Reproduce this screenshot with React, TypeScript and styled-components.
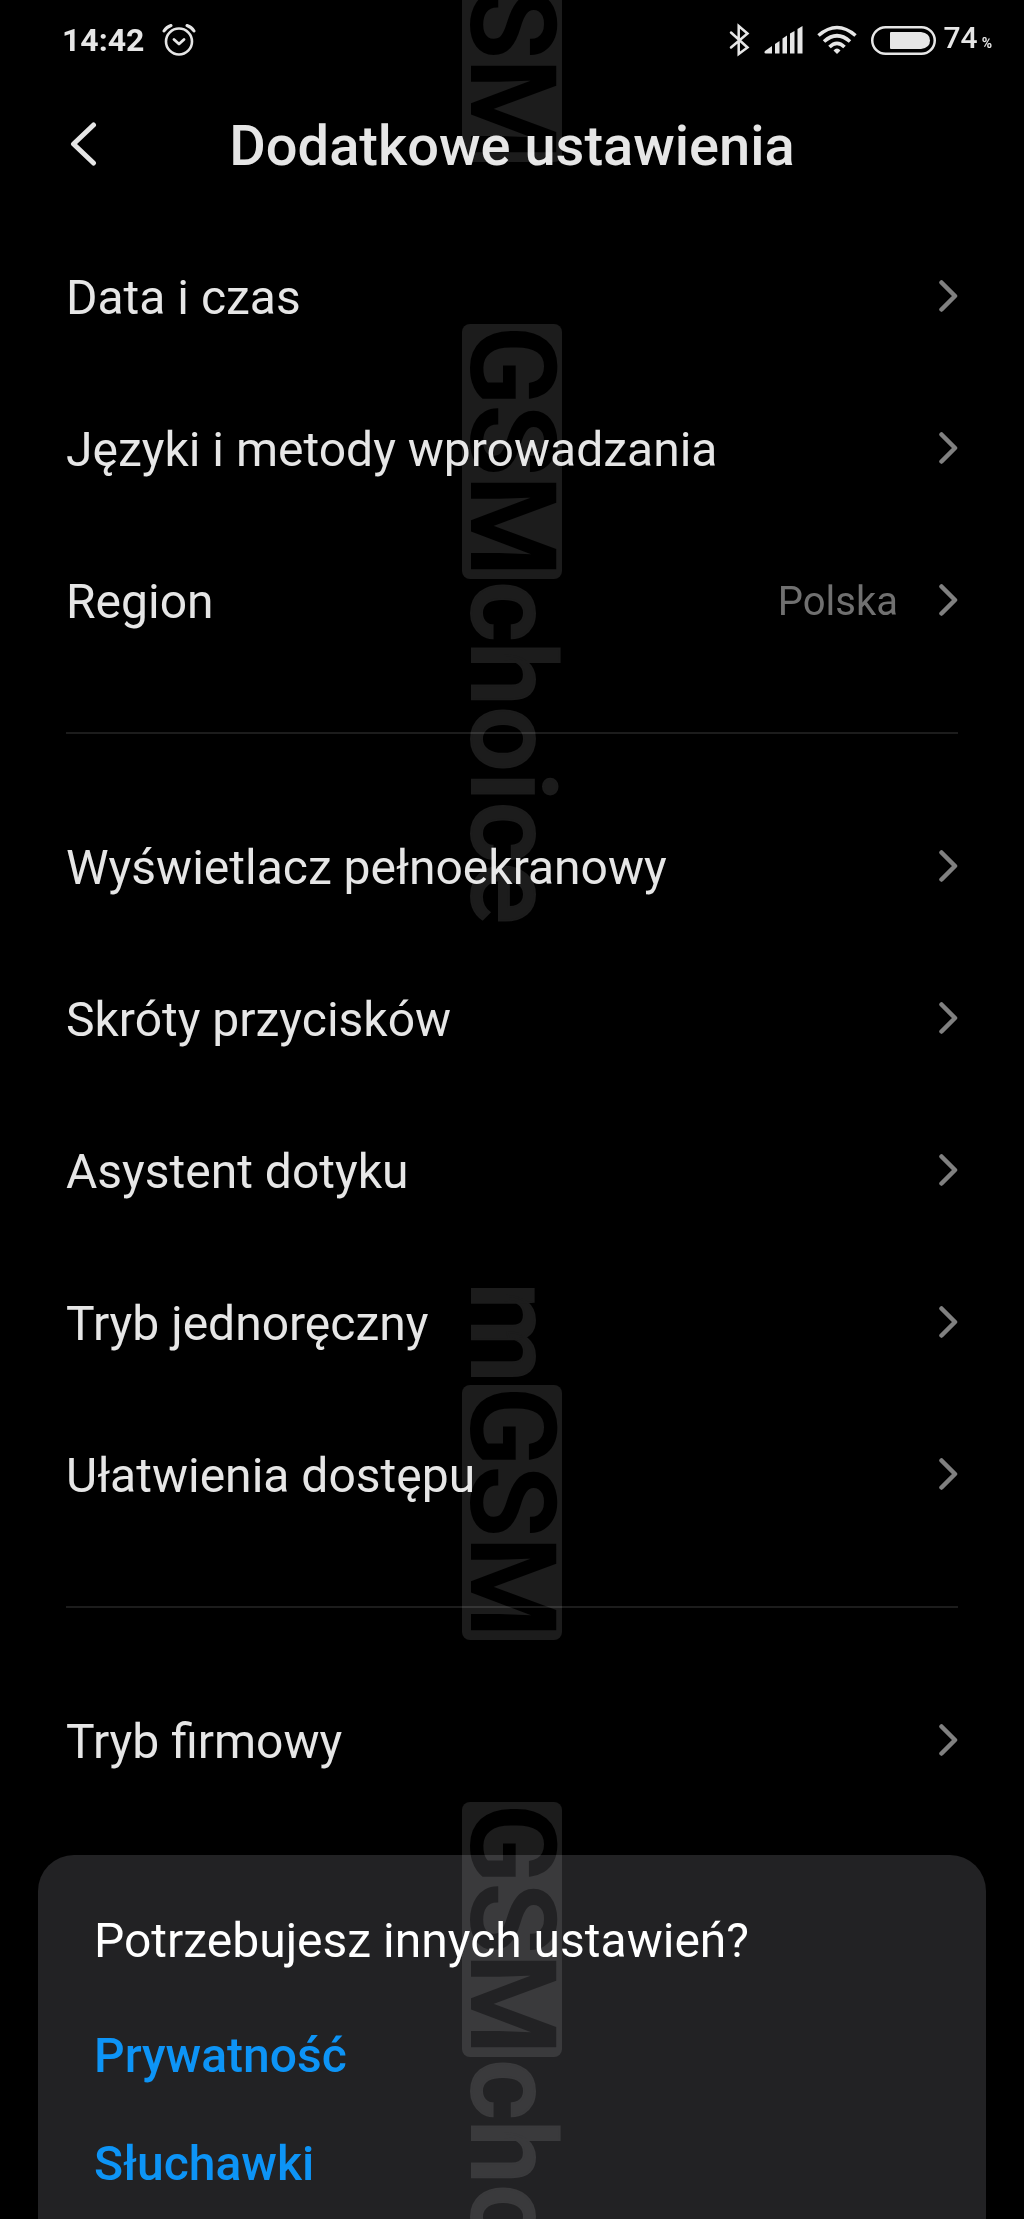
import React from "react";
import styled, { createGlobalStyle } from "styled-components";

const GlobalStyle = createGlobalStyle`
  *, *::before, *::after { box-sizing: border-box; }
  body {
    margin: 0;
    background: #000;
    color: #e6e6e6;
    font-family: Roboto, "Noto Sans", sans-serif;
  }
`;

const Screen = styled.div`
  position: relative;
  display: flex;
  flex-direction: column;
  min-height: 100vh;
  overflow: hidden;
  background: #000;
`;

const StatusBar = styled.div`
  display: flex;
  align-items: center;
  justify-content: space-between;
  height: 80px;
  padding: 0 32px 0 62px;
`;

const StatusGroup = styled.div<{ $gap: number }>`
  display: flex;
  align-items: center;
  gap: ${(p) => p.$gap}px;
`;

const Clock = styled.time`
  font-size: 32px;
  line-height: 40px;
  font-weight: 700;
`;

const Battery = styled.div`
  display: flex;
  align-items: center;
  gap: 8px;
`;

const BatteryLevel = styled.span`
  display: flex;
  align-items: baseline;
  gap: 4px;
  font-size: 30px;
  line-height: 40px;
  font-weight: 500;
`;

const Percent = styled.small`
  font-size: 14px;
  font-weight: 700;
`;

const Header = styled.header`
  display: grid;
  grid-template-columns: 1fr auto 1fr;
  align-items: center;
  height: 132px;
  padding: 0 66px;
`;

const BackButton = styled.button`
  display: flex;
  justify-self: start;
  padding: 0 4px 4px;
  border: 0;
  background: none;
  color: inherit;
  cursor: pointer;
`;

const Title = styled.h1`
  margin: 0;
  font-size: 56px;
  line-height: 64px;
  font-weight: 500;
`;

const Settings = styled.main`
  padding: 8px 66px 0;
`;

const Group = styled.ul`
  margin: 0;
  padding: 0;
  list-style: none;

  & + & {
    margin-top: 56px;
    padding-top: 56px;
    border-top: 2px solid #1c1c1c;
  }
`;

const Row = styled.a`
  display: flex;
  align-items: center;
  height: 152px;
  color: inherit;
  text-decoration: none;
`;

const Label = styled.span`
  flex: 1;
  padding-top: 4px;
  font-size: 48px;
  line-height: 56px;
`;

const Value = styled.span`
  padding: 4px 40px 0 0;
  font-size: 40px;
  line-height: 56px;
  color: #707070;
`;

const Card = styled.section`
  display: flex;
  flex: 1;
  flex-direction: column;
  align-items: flex-start;
  gap: 52px;
  margin: 39px 38px 0;
  padding: 58px 56px 0;
  border-radius: 36px 36px 0 0;
  background: #222224;
`;

const CardTitle = styled.h2`
  margin: 0;
  padding-bottom: 7px;
  font-size: 48px;
  line-height: 56px;
  font-weight: 400;
  color: #fff;
`;

const CardLink = styled.a`
  font-size: 48px;
  line-height: 56px;
  font-weight: 500;
  color: #0d94f6;
  text-decoration: none;
`;

/* Repeating vertical brand stamp laid over the whole screen. */
const Watermark = styled.div`
  position: absolute;
  inset: 0;
  display: flex;
  flex-direction: column;
  align-items: center;
  overflow: hidden;
  pointer-events: none;
  mix-blend-mode: screen;
`;

const Stamp = styled.div<{ $height: number }>`
  display: flex;
  flex: none;
  align-items: center;
  gap: 2px;
  height: ${(p) => p.$height}px;
  writing-mode: vertical-rl;
  font-size: 116px;
  line-height: 100px;
  font-weight: 500;
  color: #1c1c1c;
  -webkit-text-stroke: 2px currentColor;
  stroke-linejoin: round;

  &:first-child {
    margin-top: -196px;
  }
`;

const Badge = styled.span`
  height: 255px;
  border-radius: 8px;
  background: #1c1c1c;
  color: #000;
  text-align: center;
`;

const AlarmIcon = () => (
  <svg width="34" height="34" viewBox="0 0 34 34" fill="none" stroke="currentColor" strokeLinecap="round" strokeLinejoin="round" aria-hidden="true">
    <circle cx="17" cy="18.500" r="13" strokeWidth="2.600" />
    <path d="M12 16.500 L17 21 L22 16.500" strokeWidth="2.800" />
    <path d="M2 8 Q4.500 4 9 2.500 M32 8 Q29.500 4 25 2.500" strokeWidth="3" />
  </svg>
);

const BluetoothIcon = () => (
  <svg width="21" height="34" viewBox="0 0 21 34" fill="none" stroke="currentColor" strokeWidth="2.500" strokeLinecap="round" strokeLinejoin="miter" aria-hidden="true">
    <path d="M2 9.500 L18.500 24.500 L9.700 31 V3 L18.500 10.500 L2 24.500" />
  </svg>
);

const SignalIcon = () => (
  <svg width="39" height="28" viewBox="0 0 39 28" fill="currentColor" aria-hidden="true">
    <path d="M1 25 L8 20 V27.500 H2 Q-0.500 27.500 1 25Z" />
    <path d="M11 18 L15.500 15 V27.500 H11Z" />
    <path d="M18.500 12.500 L23 9.500 V27.500 H18.500Z" />
    <path d="M26 7.500 L30.500 5 V27.500 H26Z" />
    <path d="M33.500 3 L38.500 0 V27.500 H33.500Z" />
  </svg>
);

const WifiIcon = () => (
  <svg width="40" height="30" viewBox="0 0 40 30" fill="none" stroke="currentColor" strokeWidth="3.600" aria-hidden="true">
    <path d="M1.500 10.500 Q20 -5.500 38.500 10.500" />
    <path d="M7 16.500 Q20 5 33 16.500" />
    <path d="M12.500 22 Q20 14.500 27.500 22" />
    <path d="M16.500 25.500 Q20 21.500 23.500 25.500 L20 29Z" fill="currentColor" stroke="none" />
  </svg>
);

const BatteryIcon = () => (
  <svg width="65" height="29" viewBox="0 0 65 29" fill="none" aria-hidden="true">
    <rect x="1.250" y="1.250" width="62.500" height="26.500" rx="13.250" stroke="currentColor" strokeWidth="2.500" />
    <path d="M20 6 H50 Q59 7 59 14.500 Q59 22 50 23 H20 Q19 23 19 22 V7 Q19 6 20 6Z" fill="currentColor" />
  </svg>
);

const BackIcon = () => (
  <svg width="27" height="44" viewBox="0 0 27 44" fill="none" stroke="currentColor" strokeWidth="5" strokeLinecap="round" strokeLinejoin="round" aria-hidden="true">
    <path d="M23.500 3 L3.500 22 L23.500 41" />
  </svg>
);

const Chevron = () => (
  <svg width="20" height="32" viewBox="0 0 20 32" fill="none" stroke="#808080" strokeWidth="4.500" strokeLinecap="round" strokeLinejoin="round" aria-hidden="true">
    <path d="M3.500 2.500 L17 16 L3.500 29.500" />
  </svg>
);

type Item = { label: string; value?: string };

const groups: Item[][] = [
  [
    { label: "Data i czas" },
    { label: "Języki i metody wprowadzania" },
    { label: "Region", value: "Polska" },
  ],
  [
    { label: "Wyświetlacz pełnoekranowy" },
    { label: "Skróty przycisków" },
    { label: "Asystent dotyku" },
    { label: "Tryb jednoręczny" },
    { label: "Ułatwienia dostępu" },
  ],
  [{ label: "Tryb firmowy" }],
];

const links = ["Prywatność", "Słuchawki"];

export default function App() {
  return (
    <>
      <GlobalStyle />
      <Screen>
        <StatusBar>
          <StatusGroup $gap={18}>
            <Clock>14:42</Clock>
            <AlarmIcon />
          </StatusGroup>
          <StatusGroup $gap={14}>
            <BluetoothIcon />
            <SignalIcon />
            <WifiIcon />
            <Battery>
              <BatteryIcon />
              <BatteryLevel>
                74<Percent>%</Percent>
              </BatteryLevel>
            </Battery>
          </StatusGroup>
        </StatusBar>

        <Header>
          <BackButton type="button" aria-label="Wstecz">
            <BackIcon />
          </BackButton>
          <Title>Dodatkowe ustawienia</Title>
        </Header>

        <Settings>
          {groups.map((items) => (
            <Group key={items[0].label}>
              {items.map(({ label, value }) => (
                <li key={label}>
                  <Row href="#">
                    <Label>{label}</Label>
                    {value && <Value>{value}</Value>}
                    <Chevron />
                  </Row>
                </li>
              ))}
            </Group>
          ))}
        </Settings>

        <Card>
          <CardTitle>Potrzebujesz innych ustawień?</CardTitle>
          {links.map((link) => (
            <CardLink key={link} href="#">
              {link}
            </CardLink>
          ))}
        </Card>

        <Watermark aria-hidden="true">
          {[0, 1].map((n) => (
            <React.Fragment key={n}>
              <Stamp $height={520}>
                <span>m</span>
                <Badge>GSM</Badge>
              </Stamp>
              <Stamp $height={958}>
                <Badge>GSM</Badge>
                <span>choice</span>
              </Stamp>
            </React.Fragment>
          ))}
        </Watermark>
      </Screen>
    </>
  );
}
